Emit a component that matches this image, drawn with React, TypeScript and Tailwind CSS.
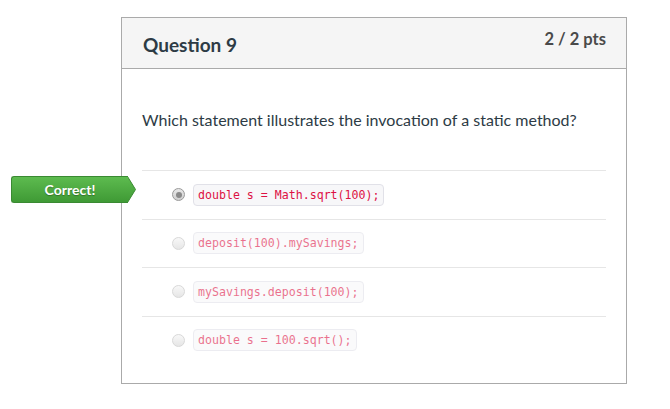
const answers = [
  { code: "double s = Math.sqrt(100);", selected: true },
  { code: "deposit(100).mySavings;", selected: false },
  { code: "mySavings.deposit(100);", selected: false },
  { code: "double s = 100.sqrt();", selected: false },
];

function Radio({ checked }: { checked: boolean }) {
  return (
    <span
      className={
        "flex h-[13px] w-[13px] shrink-0 items-center justify-center rounded-full border " +
        (checked ? "border-[#999] bg-gradient-to-b from-[#e8e8e8] to-[#cfcfcf]" : "border-[#d8d8d8] bg-gradient-to-b from-[#f8f8f8] to-[#e6e6e6]")
      }
    >
      {checked && <span className="h-[6px] w-[6px] rounded-full bg-[#8a8a8a]" />}
    </span>
  );
}

export default function App() {
  return (
    <div className="relative h-[409px] w-[670px] bg-white pl-[121px] pt-[17px] font-['Lato',sans-serif] text-[#2d3b45]">
      <div className="w-[506px] border border-[#aaaaaa]">
        <div className="flex h-[51px] items-start justify-between border-b border-[#aaaaaa] bg-[#f5f5f5] pl-[21px] pr-[20px]">
          <h2 className="mt-[14px] text-[19px] font-bold leading-[26px]">Question 9</h2>
          <span className="mt-[10px] text-[16.5px] font-bold leading-[22px] text-[#4a4a4a]">2 / 2 pts</span>
        </div>
        <div className="px-[20px] pb-[19px] pt-[39px]">
          <p className="text-[16px] leading-[24px]">Which statement illustrates the invocation of a static method?</p>
          <div className="mt-[38px]">
            {answers.map((a, i) => (
              <div key={i} className="flex h-[48.5px] items-center border-t border-[#e6e6e6] pl-[30px]">
                <Radio checked={a.selected} />
                <span
                  className={
                    "ml-[8px] rounded-[4px] border border-[#e1e1e8] bg-[#f7f7f9] px-[4px] py-[2px] font-['DejaVu_Sans_Mono',monospace] text-[11.6px] leading-[16px] text-[#dd1144] " +
                    (a.selected ? "" : "opacity-60")
                  }
                >
                  {a.code}
                </span>
              </div>
            ))}
          </div>
        </div>
      </div>

      <div className="absolute left-[11px] top-[176px] flex h-[27px] items-center">
        <div className="flex h-[27px] w-[117px] items-center justify-center rounded-l-[3px] border border-r-0 border-[#3a8a32] bg-gradient-to-b from-[#5dbb4f] to-[#3f9a35] text-[14px] font-bold text-white [text-shadow:0_1px_1px_rgba(0,0,0,0.3)]">
          Correct!
        </div>
        <svg width="9" height="27" viewBox="0 0 9 27" className="-ml-px">
          <defs>
            <linearGradient id="g" x1="0" y1="0" x2="0" y2="1">
              <stop offset="0" stopColor="#5dbb4f" />
              <stop offset="1" stopColor="#3f9a35" />
            </linearGradient>
          </defs>
          <path d="M0 0.5 L0.5 0.5 L8.5 13.5 L0.5 26.5 L0 26.5 Z" fill="url(#g)" stroke="#3a8a32" strokeWidth="1" strokeLinejoin="round" />
          <rect x="0" y="1" width="1" height="25" fill="url(#g)" />
        </svg>
      </div>
    </div>
  );
}
